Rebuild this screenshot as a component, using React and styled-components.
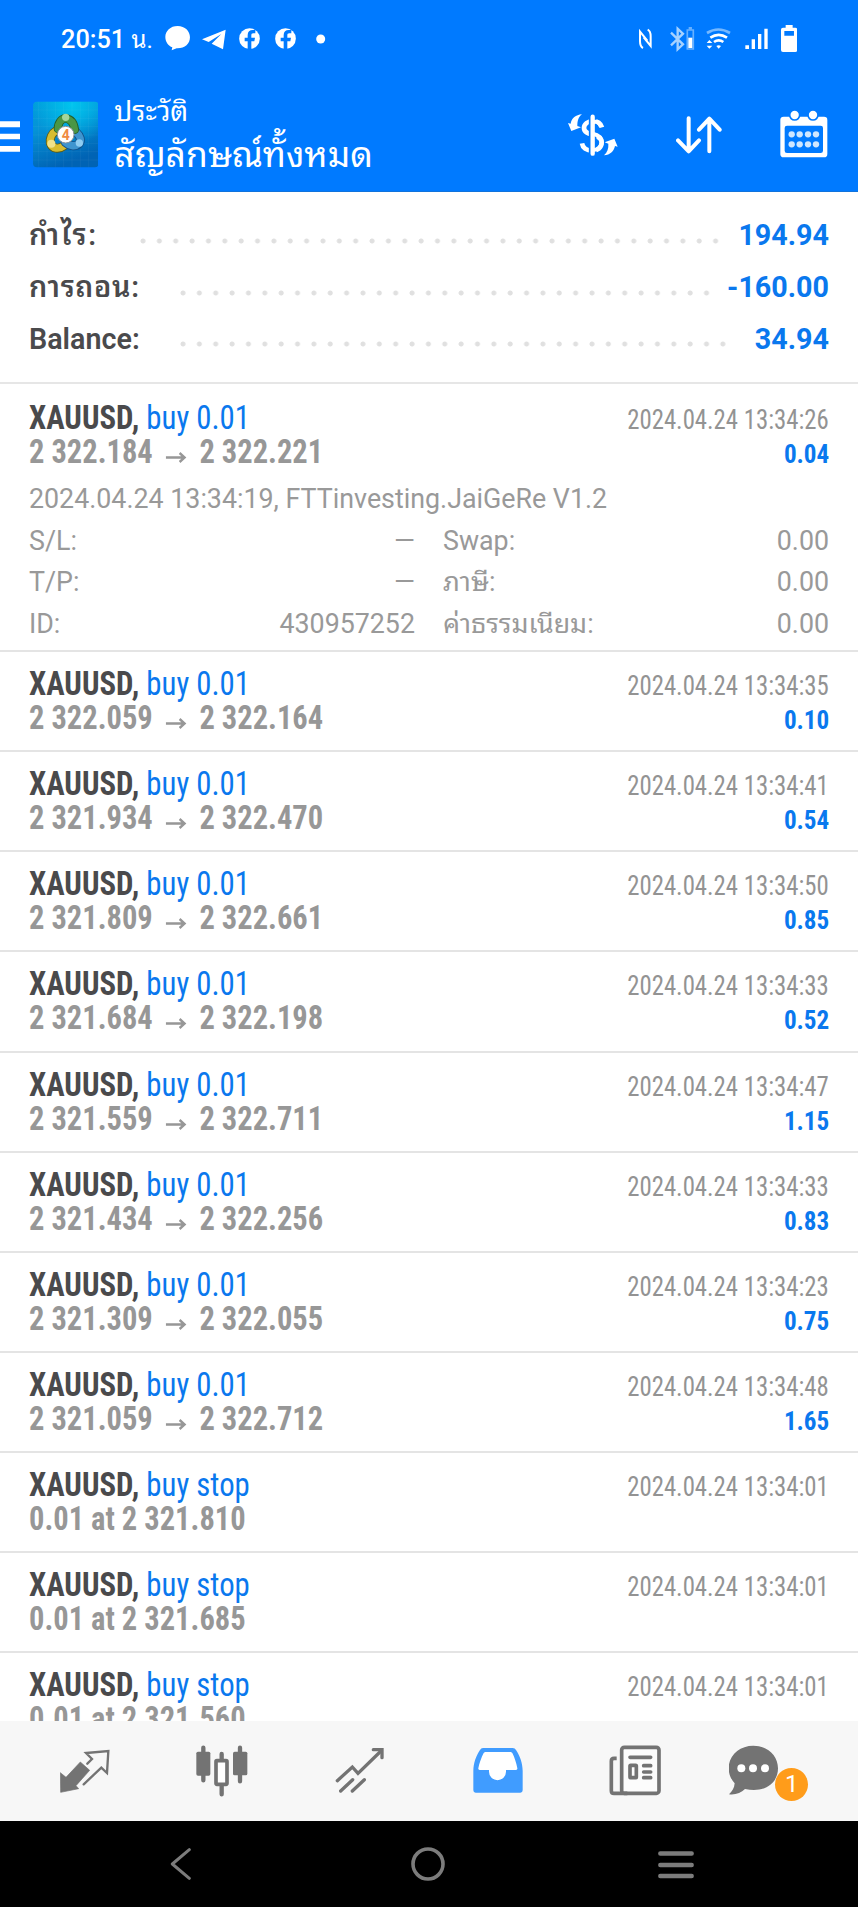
import React from "react";
import styled, { createGlobalStyle } from "styled-components";

const GlobalStyle = createGlobalStyle`
  * {
    box-sizing: border-box;
  }
  body {
    margin: 0;
    background: #fff;
    font-family: Roboto, "Noto Sans Thai Looped", "Noto Looped Thai", Loma, Waree, "Noto Sans", sans-serif;
  }
`;

const Screen = styled.div`
  width: 858px;
  height: 1907px;
  display: flex;
  flex-direction: column;
  overflow: hidden;
  background: #fff;
`;

const Header = styled.header`
  height: 192px;
  flex: none;
  background: #007aff;
  color: #fff;
  border-bottom: 1px solid #1173dc;
`;

const StatusBar = styled.div`
  height: 78px;
  display: flex;
  align-items: center;
  padding: 0 61px;
`;

const Clock = styled.span`
  width: 104px;
  padding-top: 2px;
  font-size: 25.3px;
  font-weight: 500;
  line-height: 30px;
  white-space: nowrap;
`;

const ClockUnit = styled.span`
  font-size: 24px;
  font-weight: 400;
`;

const Glyph = styled.svg`
  flex: none;
  display: block;
  width: ${(props) => props.$w}px;
  height: ${(props) => props.$h}px;
  margin-left: ${(props) => props.$ml || 0}px;
`;

const Spacer = styled.div`
  flex: 1;
`;

const Toolbar = styled.div`
  height: 114px;
  display: flex;
  align-items: center;
  padding-right: 30px;
`;

const Titles = styled.div`
  margin-left: 16px;
  height: 100px;
  white-space: nowrap;
`;

const SmallTitle = styled.div`
  height: 44px;
  line-height: 53px;
  font-size: 28px;
`;

const BigTitle = styled.div`
  height: 50px;
  line-height: 53px;
  font-size: 35.4px;
`;

const Summary = styled.section`
  height: 192px;
  flex: none;
  padding: 17px 29px 0;
  border-bottom: 2px solid #e6e6e6;
`;

const SummaryRow = styled.div`
  height: 51.8px;
  display: flex;
  align-items: center;
  font-size: 28.7px;
  line-height: 52px;
  font-weight: 600;
  color: #4a4a4c;
`;

const Label = styled.span`
  width: ${(props) => props.$w}px;
  letter-spacing: ${(props) => props.$spacing || 0}px;
  white-space: nowrap;
`;

const Dots = styled.div`
  width: ${(props) => props.$count * 16.36 - 10}px;
  height: 6px;
  margin-top: 12px;
  background: radial-gradient(circle at 3px 3px, #e0e0e0 2.1px, transparent 2.9px)
    0 0 / 16.36px 6px repeat-x;
`;

const Amount = styled.span`
  margin-left: auto;
  color: #0a78ee;
  font-weight: 700;
`;

const History = styled.main`
  flex: 1;
  min-height: 0;
  overflow: hidden;
`;

const Deal = styled.article`
  height: ${(props) => (props.$open ? "268px" : "100.125px")};
  padding: ${(props) => (props.$open ? "17px" : "15px")} 29px 0;
  border-bottom: 2px solid #e4e4e4;
`;

const Line = styled.div`
  height: 34px;
  line-height: 34px;
  display: flex;
  justify-content: space-between;
  align-items: baseline;
  font-family: "Roboto Condensed", Roboto, sans-serif;
  font-stretch: 75%;
  white-space: nowrap;
`;

/* narrows the condensed face a little further */
const Narrow = styled.span`
  display: inline-block;
  font-size: 33px;
  transform: scaleX(${(props) => props.$scale || 0.933});
  transform-origin: left;
`;

const Symbol = styled.span`
  font-weight: 700;
  color: #4a4a4c;
`;

const Kind = styled.span`
  color: #0a78ee;
`;

const Price = styled.span`
  font-weight: 700;
  color: #979797;
`;

const Arrow = styled(Glyph)`
  display: inline-block;
  margin: 0 13.5px 0 14.5px;
`;

const Time = styled(Narrow)`
  font-size: 27px;
  color: #939393;
  transform: scaleX(0.917);
  transform-origin: right;
`;

const Profit = styled(Narrow)`
  font-size: 26.7px;
  font-weight: 700;
  color: #0a78ee;
  transform: scaleX(0.94);
  transform-origin: right;
`;

const Comment = styled.div`
  height: 52px;
  line-height: 61px;
  font-size: 26.8px;
  color: #999;
  white-space: nowrap;
`;

const Details = styled.div`
  display: grid;
  grid-template-columns: 386px 386px;
  column-gap: 28px;
  grid-auto-rows: 41.3px;
  font-size: 26.8px;
  line-height: 41px;
  color: #999;
`;

const Detail = styled.div`
  display: flex;
  justify-content: space-between;
`;

const Tabs = styled.nav`
  height: 100px;
  flex: none;
  display: grid;
  grid-template-columns: repeat(6, 1fr);
  padding: 0 16px;
  background: #f7f7f7;
`;

const Tab = styled.div`
  position: relative;
  display: flex;
  align-items: center;
  justify-content: center;
  padding-right: ${(props) => props.$shift || 0}px;
`;

const Badge = styled.span`
  position: absolute;
  left: 71px;
  top: 47px;
  width: 33px;
  height: 33px;
  border-radius: 50%;
  background: #ff9c1a;
  color: #fff;
  font-size: 24px;
  line-height: 33px;
  text-align: center;
`;

const SystemNav = styled.div`
  height: 86px;
  flex: none;
  display: grid;
  grid-template-columns: repeat(3, 1fr);
  padding: 0 58px 0 56px;
  place-items: center;
  background: #000;
`;

const summary = [
  { label: "กำไร:", value: "194.94", width: 110.7, dots: 36, spacing: 1.7 },
  { label: "การถอน:", value: "-160.00", width: 150.7, dots: 33, spacing: 0.7 },
  { label: "Balance:", value: "34.94", width: 150.7, dots: 34 },
];

const deals = [
  { from: "2 322.184", to: "2 322.221", time: "13:34:26", profit: "0.04", open: true },
  { from: "2 322.059", to: "2 322.164", time: "13:34:35", profit: "0.10" },
  { from: "2 321.934", to: "2 322.470", time: "13:34:41", profit: "0.54" },
  { from: "2 321.809", to: "2 322.661", time: "13:34:50", profit: "0.85" },
  { from: "2 321.684", to: "2 322.198", time: "13:34:33", profit: "0.52" },
  { from: "2 321.559", to: "2 322.711", time: "13:34:47", profit: "1.15" },
  { from: "2 321.434", to: "2 322.256", time: "13:34:33", profit: "0.83" },
  { from: "2 321.309", to: "2 322.055", time: "13:34:23", profit: "0.75" },
  { from: "2 321.059", to: "2 322.712", time: "13:34:48", profit: "1.65" },
  { stop: "2 321.810", time: "13:34:01" },
  { stop: "2 321.685", time: "13:34:01" },
  { stop: "2 321.560", time: "13:34:01" },
];

const details = [
  ["S/L:", "—"],
  ["Swap:", "0.00"],
  ["T/P:", "—"],
  ["ภาษี:", "0.00"],
  ["ID:", "430957252"],
  ["ค่าธรรมเนียม:", "0.00"],
];

const FacebookIcon = ({ ml }) => (
  <Glyph $w={21} $h={30} $ml={ml} viewBox="0 0 63 90">
    <circle cx="31.5" cy="44" r="31" fill="#fff" />
    <path
      d="M26 76V52h-9V41h9v-8c0-10 6-15 15-15h8v10h-6c-5 0-6 2-6 6v7h11l-2 11h-9v24z"
      fill="#007aff"
    />
  </Glyph>
);

function StatusIcons() {
  return (
    <>
      <Glyph $w={25.3} $h={30} viewBox="495 72 76 90">
        <path
          d="M533 78c-22 0-37 15-37 33 0 15 9 27 21 31l-2 9 15-6c24 1 40-13 40-33 0-19-15-34-37-34z"
          fill="#fff"
        />
      </Glyph>
      <Glyph $w={24} $h={30} $ml={11.3} viewBox="605 72 72 90">
        <path d="M676 89l-71 29 20 8 38-24-29 29 34 17z" fill="#fff" />
      </Glyph>
      <FacebookIcon ml={13.4} />
      <FacebookIcon ml={15} />
      <Glyph $w={9.4} $h={30} $ml={20.3} viewBox="950 72 28 90">
        <circle cx="964" cy="117" r="13.5" fill="#fff" />
      </Glyph>
      <Spacer />
      {/* nfc */}
      <Glyph $w={13} $h={30} viewBox="629 72 39 90" fill="none" stroke="#fff" strokeWidth="6">
        <path d="M641 144c-8-4-9-10-9-20V95l22 27" />
        <path d="M655 89c8 4 9 10 9 20v29l-21-26" />
      </Glyph>
      {/* bluetooth with the headset battery */}
      <Glyph $w={25.3} $h={30} $ml={17.7} viewBox="722 72 76 90">
        <path
          d="M725 98l36 35-16 15V86l16 15-36 35"
          fill="none"
          stroke="#a6d2ff"
          strokeWidth="7"
        />
        <path d="M774 90h18v57h-18z" fill="none" stroke="#68b1ff" strokeWidth="5" />
        <path d="M778 81h10v8h-10z" fill="#68b1ff" />
        <path d="M777 113h12v31h-12z" fill="#fff" />
      </Glyph>
      <Glyph $w={25} $h={30} $ml={11.3} viewBox="831 72 75 90" fill="none" strokeWidth="8">
        <path d="M834 99q34-21 69 0" stroke="#75b8ff" />
        <path d="M844 113q25-17 50 0M855 126q14-10 28 0" stroke="#fff" />
        <path
          d="M862 138q7-5 14 0l-7 8zM833 129l8-9 9 9zM833 137h17l-9 9z"
          fill="#fff"
        />
      </Glyph>
      <Glyph $w={23} $h={30} $ml={13.3} viewBox="945 72 69 90">
        <path
          d="M946 136h11v11h-11zM965 118h10v29h-10zM984 102h10v45h-10zM1003 86h10v61h-10z"
          fill="#fff"
        />
      </Glyph>
      <Glyph $w={16.3} $h={30} $ml={13} viewBox="1053 72 49 90">
        <path
          fillRule="evenodd"
          d="M1067 75h21v8h8q6 0 6 6v61q0 6-6 6h-37q-6 0-6-6V89q0-6 6-6h8zM1063 93v14h29V93z"
          fill="#fff"
        />
      </Glyph>
    </>
  );
}

const AppLogo = () => (
  <Glyph $w={65.7} $h={70} $ml={12.3} viewBox="98 300 197 210">
    <defs>
      <linearGradient id="tile" x1="0" y1="0" x2="0.35" y2="1">
        <stop offset="0" stopColor="#009edb" />
        <stop offset="0.4" stopColor="#0593d6" />
        <stop offset="1" stopColor="#0063b4" />
      </linearGradient>
      <radialGradient id="glow" cx="0.6" cy="0.05" r="0.6">
        <stop offset="0" stopColor="#00c5ee" />
        <stop offset="1" stopColor="#00c5ee" stopOpacity="0" />
      </radialGradient>
    </defs>
    <rect x="98" y="305" width="197" height="197" rx="12" fill="url(#tile)" />
    <rect x="98" y="305" width="197" height="197" rx="12" fill="url(#glow)" />
    <path
      d="M115 305v197M140 305v197M165 305v197M190 305v197M215 305v197M240 305v197M265 305v197M98 330h197M98 355h197M98 380h197M98 405h197M98 430h197M98 455h197M98 480h197"
      stroke="#fff"
      strokeOpacity="0.07"
      strokeWidth="2"
    />
    <g fill="none" strokeLinecap="round">
      <path d="M168 392c-14 8-20 24-18 37 6 18 26 20 42 8" stroke="#5d5c14" strokeWidth="27" />
      <path d="M168 392c-14 8-20 24-18 37 6 18 26 20 42 8" stroke="#d8bd30" strokeWidth="22" />
      <path d="M227 396c13 12 17 26 9 35-12 11-30 6-41-4" stroke="#134f86" strokeWidth="27" />
      <path d="M227 396c13 12 17 26 9 35-12 11-30 6-41-4" stroke="#3f95cf" strokeWidth="22" />
      <path d="M173 386c0-17 10-29 23-31 16 3 25 15 27 34" stroke="#245d28" strokeWidth="26" />
      <path d="M173 386c0-17 10-29 23-31 16 3 25 15 27 34" stroke="#4a9645" strokeWidth="21" />
    </g>
    <circle cx="196" cy="352" r="11" fill="#a4d59a" />
    <circle cx="153" cy="431" r="12" fill="#f0e28a" />
    <circle cx="237" cy="429" r="11" fill="#8fcdf2" />
    <circle cx="196" cy="404" r="25" fill="#fff" stroke="#87929a" strokeWidth="3" />
    <text
      x="196"
      y="419"
      textAnchor="middle"
      fontSize="42"
      fontWeight="700"
      fill="#ef8b43"
      fontFamily="Roboto"
    >
      4
    </text>
  </Glyph>
);

const HeaderIcons = () => (
  <>
    <Glyph $w={50} $h={56.7} viewBox="413 320 150 170">
      <path
        d="M515 381c-4-13-14-19-28-19-14 0-26 9-26 21 0 26 53 15 53 43 0 15-12 25-28 25-18 0-29-9-31-22"
        fill="none"
        stroke="#fff"
        strokeWidth="14"
      />
      <path d="M487 342v124" stroke="#007aff" strokeWidth="23" />
      <path d="M487 349v111" stroke="#fff" strokeWidth="13" strokeLinecap="round" />
      <path
        d="M487 367c14-7 22 2 25 13M487 400c14 3 27 9 27 26 0 13-12 23-27 24"
        fill="none"
        stroke="#fff"
        strokeWidth="12"
      />
      <path
        d="M455 342c-19 2-31 11-34 28l-8-2 10 24 29-11-11-4c0-15 3-27 14-35zM521 465c19-2 29-11 33-28l8 2-10-24-29 11 11 4c1 15-3 26-13 35z"
        fill="#fff"
      />
    </Glyph>
    <Glyph
      $w={46}
      $h={56.7}
      $ml={58}
      viewBox="737 320 138 170"
      fill="none"
      stroke="#fff"
      strokeWidth="12"
      strokeLinecap="round"
      strokeLinejoin="round"
    >
      <path d="M775 354v99M743 420l32 33 31-33M837 453v-98M806 388l31-33 31 33" />
    </Glyph>
    <Glyph $w={48} $h={56.7} $ml={58.4} viewBox="1050 320 144 170">
      <rect x="1051" y="349" width="141" height="122" rx="10" fill="#fff" />
      <rect x="1064" y="376" width="115" height="82" rx="7" fill="#007aff" />
      <g fill="#fff" stroke="#007aff" strokeWidth="5">
        <circle cx="1094" cy="344" r="15" />
        <circle cx="1149" cy="344" r="15" />
      </g>
      {[1085, 1109, 1134, 1158].map((x) => (
        <g key={x} fill="#cfe6ff">
          <circle cx={x} cy="402" r="9.5" />
          <circle cx={x} cy="432" r="9.5" />
        </g>
      ))}
    </Glyph>
  </>
);

function DealRow({ deal }) {
  return (
    <Deal $open={deal.open}>
      <Line>
        <Narrow>
          <Symbol>XAUUSD, </Symbol>
          <Kind>{deal.stop ? "buy stop" : "buy 0.01"}</Kind>
        </Narrow>
        <Time>2024.04.24 {deal.time}</Time>
      </Line>
      <Line>
        <Narrow $scale={0.924}>
          {deal.stop ? (
            <Price>0.01 at {deal.stop}</Price>
          ) : (
            <Price>
              {deal.from}
              <Arrow
                $w={22.5}
                $h={13}
                viewBox="0 0 21 13"
                fill="none"
                stroke="#979797"
                strokeWidth="2.4"
                preserveAspectRatio="none"
              >
                <path d="M0 7.5h19M14 3l5 4.5-5 4.5" />
              </Arrow>
              {deal.to}
            </Price>
          )}
        </Narrow>
        <Profit>{deal.profit}</Profit>
      </Line>
      {deal.open && (
        <>
          <Comment>2024.04.24 13:34:19, FTTinvesting.JaiGeRe V1.2</Comment>
          <Details>
            {details.map(([label, value]) => (
              <Detail key={label}>
                <span>{label}</span>
                <span>{value}</span>
              </Detail>
            ))}
          </Details>
        </>
      )}
    </Deal>
  );
}

function BottomTabs() {
  return (
    <Tabs>
      <Tab>
        <Glyph $w={50} $h={52} viewBox="181 135 150 156">
          <path
            d="M182 218l17 14 43-46 28 25-41 46 8 9-54 11z"
            fill="#737373"
            stroke="#737373"
            strokeLinejoin="round"
            strokeWidth="2"
          />
          <path
            d="M263 191l14-14-18-18 67-6-4 66-17-16-53 50"
            fill="none"
            stroke="#737373"
            strokeWidth="7"
            strokeLinecap="round"
          />
        </Glyph>
      </Tab>
      <Tab>
        <Glyph $w={52} $h={52} viewBox="590 135 156 156">
          <path
            d="M612 143v98M722 143v101M667 162v20M667 255v28"
            stroke="#737373"
            strokeWidth="13"
            strokeLinecap="round"
          />
          <rect x="591" y="155" width="42" height="72" rx="5" fill="#737373" />
          <rect x="701" y="155" width="43" height="71" rx="5" fill="#737373" />
          <rect
            x="650"
            y="182"
            width="33"
            height="71"
            rx="3"
            fill="#fff"
            stroke="#737373"
            strokeWidth="11"
          />
        </Glyph>
      </Tab>
      <Tab>
        <Glyph
          $w={50}
          $h={52}
          viewBox="1006 135 150 156"
          fill="none"
          stroke="#737373"
          strokeWidth="10"
          strokeLinecap="round"
        >
          <path d="M1013 242l45-41 17 19 69-67M1023 273l36-34M1058 273l36-34" />
          <path d="M1121 149h26v24" strokeWidth="10" />
        </Glyph>
      </Tab>
      <Tab>
        <Glyph $w={50} $h={52} viewBox="130 135 150 156">
          <path
            d="M160 144h89q7 0 10 6c12 18 20 40 20 62v59q0 7-7 7H138q-7 0-7-7v-59c0-22 8-44 20-62q3-6 9-6z"
            fill="#409cff"
          />
          <path
            d="M166 156l-4 3c-7 14-13 30-16 46q-1 5 4 5h28v5a25 25 0 0 0 51 0v-5h30q5 0 4-5c-3-16-8-32-15-46l-4-3z"
            fill="#fff"
          />
        </Glyph>
      </Tab>
      <Tab>
        <Glyph
          $w={52}
          $h={52}
          viewBox="542 134 156 156"
          fill="none"
          stroke="#737373"
          strokeWidth="11"
        >
          <rect x="580" y="141" width="112" height="138" rx="8" fill="#fcfcfc" />
          <path d="M565 174h-8q-8 0-8 8v89q0 8 8 8h40" />
          <path d="M605 171h62M646 196h21M646 215h21M646 232h21" strokeLinecap="round" />
          <rect x="605" y="195" width="19" height="37" rx="2" />
        </Glyph>
      </Tab>
      <Tab $shift={38}>
        <Glyph $w={50} $h={52} viewBox="901 135 150 156">
          <path
            d="M974 137c-42 0-74 30-74 67 0 18 7 34 18 46-1 15-8 25-17 33 19 3 36-5 48-16 60 13 99-18 99-62 0-38-32-68-74-68z"
            fill="#737373"
          />
          <g fill="#fff">
            <circle cx="938" cy="205" r="12" />
            <circle cx="973" cy="205" r="12" />
            <circle cx="1009" cy="205" r="12" />
          </g>
        </Glyph>
        <Badge>1</Badge>
      </Tab>
    </Tabs>
  );
}

function App() {
  return (
    <>
      <GlobalStyle />
      <Screen>
        <Header>
          <StatusBar>
            <Clock>
              20:51 <ClockUnit>น.</ClockUnit>
            </Clock>
            <StatusIcons />
          </StatusBar>
          <Toolbar>
            <Glyph $w={20.3} $h={56.7} viewBox="0 320 61 170">
              <path d="M0 363h61v18H0zM0 400h61v17H0zM0 437h61v17H0z" fill="#fff" />
            </Glyph>
            <AppLogo />
            <Titles>
              <SmallTitle>ประวัติ</SmallTitle>
              <BigTitle>สัญลักษณ์ทั้งหมด</BigTitle>
            </Titles>
            <Spacer />
            <HeaderIcons />
          </Toolbar>
        </Header>
        <Summary>
          {summary.map((row) => (
            <SummaryRow key={row.label}>
              <Label $w={row.width} $spacing={row.spacing}>
                {row.label}
              </Label>
              <Dots $count={row.dots} />
              <Amount>{row.value}</Amount>
            </SummaryRow>
          ))}
        </Summary>
        <History>
          {deals.map((deal, i) => (
            <DealRow key={i} deal={deal} />
          ))}
        </History>
        <BottomTabs />
        <SystemNav>
          <Glyph $w={21} $h={32} viewBox="510 444 63 96" fill="none">
            <path
              d="M568 449l-51 43 51 43"
              stroke="#7c7c7c"
              strokeWidth="9"
              strokeLinecap="round"
              strokeLinejoin="round"
            />
          </Glyph>
          <Glyph $w={34} $h={34} viewBox="0 0 34 34" fill="none">
            <circle cx="17" cy="17" r="15" stroke="#7c7c7c" strokeWidth="3.6" />
          </Glyph>
          <Glyph $w={36} $h={29} viewBox="0 0 36 29" fill="none">
            <path
              d="M2.3 3.5h31.4M2.3 15h31.4M2.3 26h31.4"
              stroke="#7c7c7c"
              strokeWidth="4.4"
              strokeLinecap="round"
            />
          </Glyph>
        </SystemNav>
      </Screen>
    </>
  );
}

export default App;
